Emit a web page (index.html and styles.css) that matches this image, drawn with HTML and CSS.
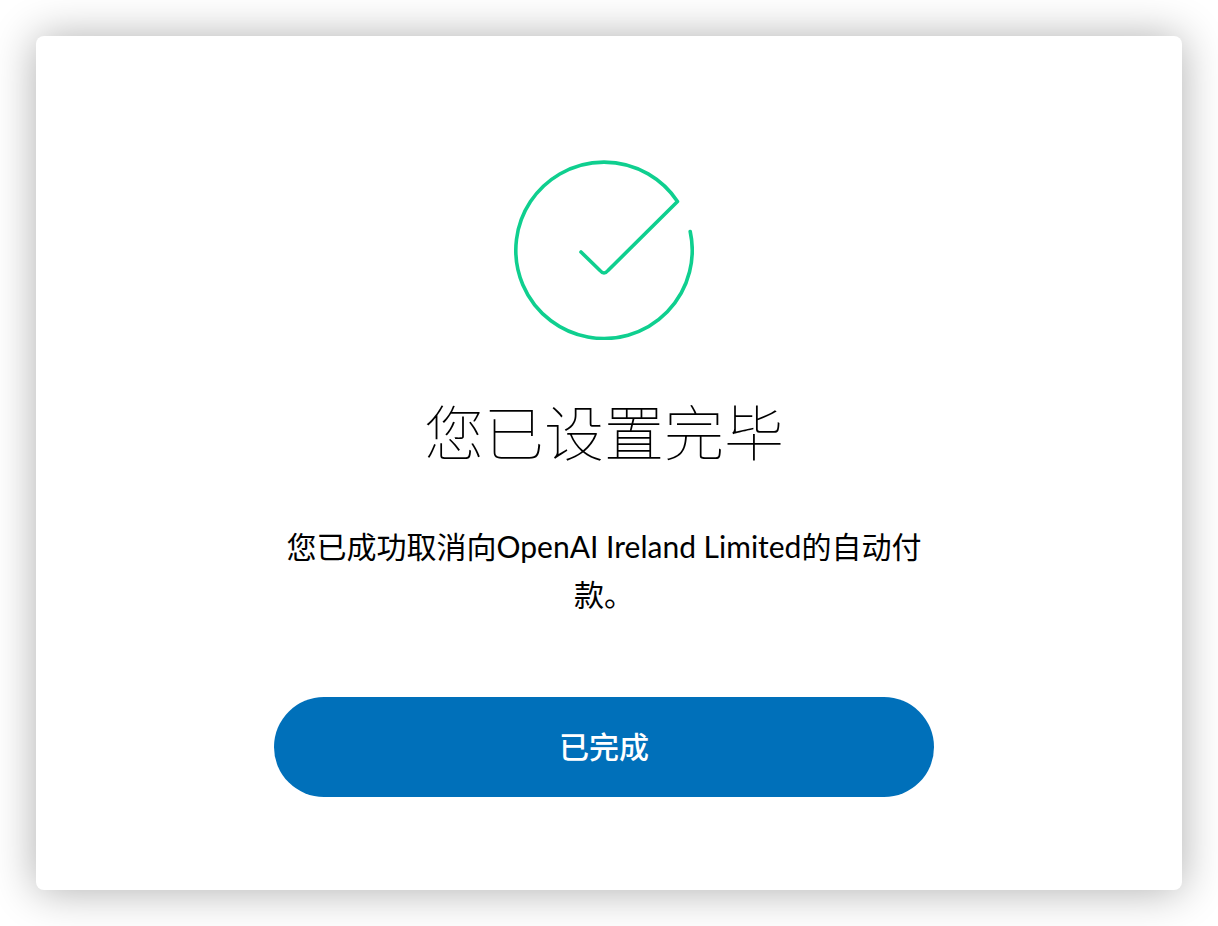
FILE: index.html
```html
<!DOCTYPE html>
<html lang="zh-CN">
<head>
    <meta charset="UTF-8">
    <meta name="viewport" content="width=device-width, initial-scale=1.0">
    <title>您已设置完毕</title>
    <link rel="stylesheet" href="styles.css">
</head>
<body>
    <main class="dialog">
        <div class="content">
            <svg class="check" viewBox="0 0 180 180" aria-hidden="true">
                <path d="M67 92 L86 110.500 Q90 115.500 94 110.500 L163.500 41.500 A88.200 88.200 0 1 0 176.200 71.500"/>
            </svg>
            <h1 class="title">您已设置完毕</h1>
            <p class="message">您已成功取消向OpenAI Ireland Limited的自动付款。</p>
            <button class="done" type="button">已完成</button>
        </div>
    </main>
</body>
</html>
```
FILE: styles.css
```css
* {
    box-sizing: border-box;
}

body {
    display: flex;
    min-height: 100vh;
    margin: 0;
    padding: 36px;
    background-color: #fff;
    color: #000;
    font-family: "Noto Sans CJK SC", sans-serif;
}

.dialog {
    display: flex;
    flex: 1;
    justify-content: center;
    padding: 124px 20px 93px 10px;
    border-radius: 8px;
    background-color: #fff;
    box-shadow: 0 1px 44px rgba(0, 0, 0, 0.32);
}

.content {
    display: flex;
    flex-direction: column;
    align-items: center;
    width: 100%;
    max-width: 660px;
}

.check {
    width: 180px;
    height: 180px;
    fill: none;
    stroke: #0fcf8f;
    stroke-width: 3.6;
    stroke-linecap: round;
    stroke-linejoin: round;
}

.title {
    margin: 54px 0 0;
    font-size: 60px;
    font-weight: 100;
    line-height: 72px;
}

.message {
    margin: 56px 0 0;
    font-family: Lato, "Noto Sans CJK SC", sans-serif;
    font-size: 30px;
    line-height: 48px;
    text-align: center;
}

.done {
    width: 100%;
    height: 100px;
    margin-top: 79px;
    padding: 0 0 4px;
    border: none;
    border-radius: 50px;
    background-color: #0070ba;
    color: #fff;
    font-family: inherit;
    font-size: 30px;
    font-weight: 500;
    cursor: pointer;
}
```
